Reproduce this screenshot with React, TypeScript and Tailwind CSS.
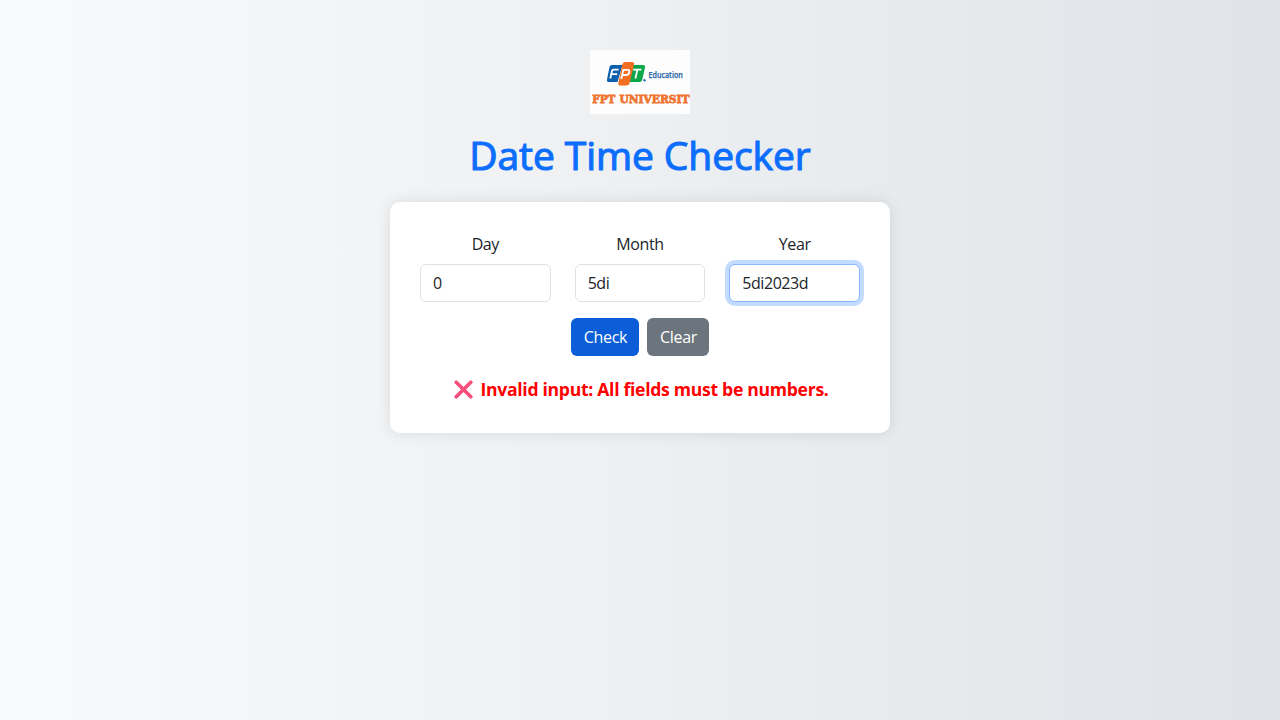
import { useState } from "react";

function Logo() {
  return (
    <svg width="100" height="64" viewBox="0 0 100 64" className="block bg-[#fdfdfd]" role="img">
      <path d="M22 15H32.5L27.5 32H19Q16.4 32 17 29.5L19.5 17Q20 15 22 15Z" fill="#0b5fad" />
      <path d="M43.5 15H53Q55.6 15 55 17.5L52.3 29.5Q51.8 32 49.5 32H39Z" fill="#0ea64b" />
      <path d="M35 12H42Q44.7 12 44 14.8L39.7 32.5Q39 35.5 36.5 35.5H30.5Q27.7 35.5 28.4 32.7L32.2 14.8Q32.8 12 35 12Z" fill="#f26f21" />
      <g fill="none" stroke="#fff" strokeWidth="1.8">
        <path d="M20.3 28.5L22 20.8Q22.3 19.6 23.6 19.6H28.6M21.3 24.2H27.2" />
        <path d="M31.3 29L33.3 19.8H37.5Q39.8 19.8 39.3 22Q38.8 25 36.3 25H32.5" />
        <path d="M43.2 19.6H51.5M47.4 19.6L45.4 28.5" />
      </g>
      <circle cx="54.5" cy="30.3" r="1.2" fill="#2870b4" />
      <text x="58.5" y="27.6" fontSize="8.6" fontWeight="600" fill="#2b68a8" stroke="#2b68a8" strokeWidth="0.25" fontFamily="Open Sans, sans-serif" textLength="34.3" lengthAdjust="spacingAndGlyphs">Education</text>
      <g fontSize="11.4" fontWeight="700" fill="#ee7430" stroke="#ee7430" strokeWidth="0.8" fontFamily="DejaVu Serif, serif">
        <text x="2.3" y="52.6" textLength="23" lengthAdjust="spacingAndGlyphs">FPT</text>
        <text x="29.5" y="52.6" textLength="70" lengthAdjust="spacingAndGlyphs">UNIVERSIT</text>
      </g>
    </svg>
  );
}

const fieldBase =
  "h-[38px] w-full rounded-md border bg-white px-3 text-base leading-6 tracking-[-0.45px] text-[#212529] outline-none";

export default function App() {
  const [values, setValues] = useState({ Day: "0", Month: "5di", Year: "5di2023d" });
  const names = ["Day", "Month", "Year"] as const;
  return (
    <div className="flex min-h-screen flex-col items-center bg-[linear-gradient(to_right,#f8fafc,#f0f1f3_42%,#e8ecee_65%,#e0e3e8)] pt-[50px] font-['Open_Sans','Noto_Sans',sans-serif] text-base leading-6 text-[#212529]">
      <Logo />
      <h1 className="mt-[17px] mb-px whitespace-nowrap text-[39px] leading-12 font-normal tracking-[-0.08px] text-[#0d6efd] [-webkit-text-stroke:1.1px_#0d6efd]">Date Time Checker</h1>
      <main className="mt-[22px] h-[231px] w-[500px] rounded-[10px] bg-white p-[30px] shadow-[0_0_15px_rgba(0,0,0,0.1)]">
        <div className="grid grid-cols-3 gap-6">
          {names.map((name) => (
            <label key={name} className="flex flex-col items-center gap-2">
              <span className="tracking-[-0.4px]">{name}</span>
              <input
                value={values[name]}
                onChange={(e) => setValues({ ...values, [name]: e.target.value })}
                className={`${fieldBase} ${name === "Year" ? "border-[#86b7fe] shadow-[0_0_0_4px_rgba(13,110,253,0.25)]" : "border-[#dee2e6]"}`}
              />
            </label>
          ))}
        </div>
        <div className="mt-4 flex justify-center gap-2 tracking-[-0.3px]">
          <button className="h-[38px] w-[68px] rounded-md bg-[#0b5ed7] pl-px text-white">Check</button>
          <button className="h-[38px] w-[62px] rounded-md bg-[#6c757d] pl-px text-white" onClick={() => setValues({ Day: "", Month: "", Year: "" })}>Clear</button>
        </div>
        <p className="mt-5 flex items-center justify-center gap-[7px] pl-[3px] text-[17.6px] leading-[27px] font-bold tracking-[-0.3px] whitespace-nowrap text-[#ff0000]">
          <svg width="19" height="19" viewBox="0 0 19 19" fill="none" strokeLinecap="round">
            <path d="M2.2 2.2L16.8 16.8M16.8 2.2L2.2 16.8" stroke="#f94f7c" strokeWidth="3.6" />
          </svg>
          <span>Invalid input: All fields must be numbers.</span>
        </p>
      </main>
    </div>
  );
}
